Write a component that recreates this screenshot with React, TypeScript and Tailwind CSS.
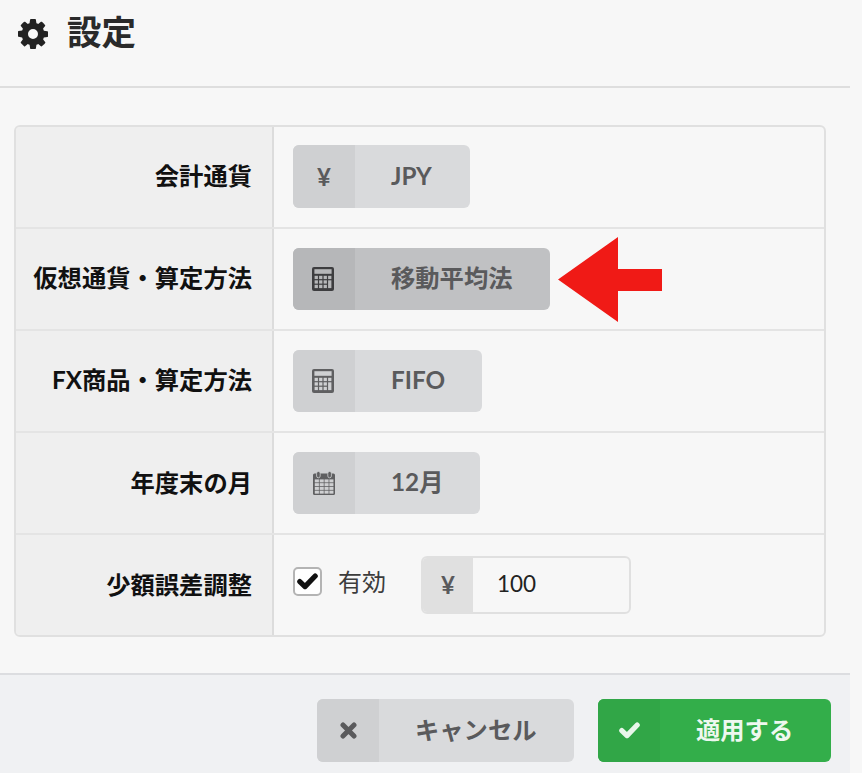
import React from "react";

const font = "[font-family:Lato,'Noto_Sans_CJK_JP',sans-serif]";

function Gear() {
  return (
    <svg width="30" height="30" viewBox="128 128 1536 1536" className="mt-[6px] shrink-0" fill="#222222">
      <path
        fillRule="evenodd"
        d="M1152 896q0-106-75-181t-181-75-181 75-75 181 75 181 181 75 181-75 75-181zm512-109v222q0 12-8 24t-20 13l-185 28q-19 54-39 91 35 50 107 138 10 12 10 25t-9 23q-27 37-99 108t-94 71q-12 0-26-9l-138-108q-44 23-91 38-16 136-29 186-7 28-36 28h-222q-14 0-24.500-8.500t-11.500-21.500l-28-184q-49-16-90-37l-141 107q-10 9-25 9-14 0-25-11-126-114-165-168-7-10-7-23 0-12 8-23 15-21 51-66.500t54-70.500q-27-50-41-99l-183-27q-13-2-21-12.500t-8-23.500v-222q0-12 8-23t19-13l186-28q14-46 39-92-40-57-107-138-10-12-10-24 0-10 9-23 26-36 98.500-107.500t94.500-71.500q13 0 26 10l138 107q44-23 91-38 16-136 29-186 7-28 36-28h222q14 0 24.500 8.500t11.500 21.500l28 184q49 16 90 37l142-107q9-9 24-9 13 0 25 10 129 119 165 170 7 8 7 22 0 12-8 23-15 21-51 66.500t-54 70.500q26 50 41 98l183 28q13 2 21 12.500t8 23.500z"
      />
    </svg>
  );
}

function Check({ color }: { color: string }) {
  return (
    <svg width="21" height="17" viewBox="0 0 21 17">
      <polyline points="2.8,8.6 8,13.6 18.2,3" fill="none" stroke={color} strokeWidth="5.2" strokeLinecap="round" strokeLinejoin="round" />
    </svg>
  );
}

function Cross() {
  return (
    <svg width="17" height="17" viewBox="0 0 17 17">
      <path d="M3 3 L14 14 M14 3 L3 14" fill="none" stroke="#5a5a5c" strokeWidth="5" strokeLinecap="round" />
    </svg>
  );
}

function Calculator({ color, hole }: { color: string; hole: string }) {
  const keys: React.ReactNode[] = [];
  for (let r = 0; r < 3; r++) {
    for (let c = 0; c < 4; c++) {
      if (c === 3 && r > 0) continue;
      keys.push(<rect key={`${r}-${c}`} x={2.6 + c * 4.5} y={8.8 + r * 4.5} width={3.3} height={3.3} fill={hole} />);
    }
  }
  return (
    <svg width="22" height="24" viewBox="0 0 22 24" className="mr-[2px]">
      <rect x="0" y="0" width="22" height="24" rx="2" fill={color} />
      <rect x="2.4" y="2.2" width="17.2" height="4.6" fill={hole} />
      {keys}
      <rect x="16.1" y="13.3" width="3.3" height="7.8" fill={hole} />
    </svg>
  );
}

function Calendar({ color, hole }: { color: string; hole: string }) {
  const cells: React.ReactNode[] = [];
  for (let r = 0; r < 4; r++) {
    for (let c = 0; c < 4; c++) {
      cells.push(<rect key={`${r}-${c}`} x={1.8 + c * 4.85} y={8.4 + r * 3.75} width={4.1} height={3} fill={hole} />);
    }
  }
  return (
    <svg width="22" height="24" viewBox="0 0 22 24">
      <rect x="0" y="2.6" width="22" height="21.4" rx="1.5" fill={color} />
      <rect x="3.6" y="0.4" width="3.6" height="6.4" rx="1.8" fill={color} stroke={hole} strokeWidth="0.8" />
      <rect x="14.8" y="0.4" width="3.6" height="6.4" rx="1.8" fill={color} stroke={hole} strokeWidth="0.8" />
      {cells}
    </svg>
  );
}

function Labeled({
  icon,
  text,
  width,
  active,
  up,
}: {
  icon: React.ReactNode;
  text: string;
  width: string;
  active?: boolean;
  up?: boolean;
}) {
  return (
    <div className={`flex h-[62.5px] overflow-hidden rounded-[6px] ${width} ${up ? "-mt-[1px]" : ""} ${active ? "bg-[#c0c1c3]" : "bg-[#d9dadc]"}`}>
      <div className={`flex h-full w-[62px] shrink-0 items-center justify-center ${active ? "bg-[#b6b7b9]" : "bg-[#cfd0d2]"}`}>
        {icon}
      </div>
      <div className="flex items-center pb-[1px] pl-[36px] text-[24.3px] font-bold text-[#5a5a5c]">{text}</div>
    </div>
  );
}

function Row({
  label,
  children,
  last,
  lowered,
}: {
  label: string;
  children: React.ReactNode;
  last?: boolean;
  lowered?: boolean;
}) {
  return (
    <div className={`flex ${last ? "h-[100px]" : "h-[102px] border-b-2 border-[#e4e4e4]"}`}>
      <div
        className={`flex w-[258px] shrink-0 items-center justify-end border-r-2 border-[#dcdcdc] bg-[#efefef] pr-[20px] text-[24.3px] font-bold text-[#111111] ${lowered ? "pt-0" : "pb-[2px]"}`}
      >
        {label}
      </div>
      <div className="flex flex-1 items-center pl-[19px]">{children}</div>
    </div>
  );
}

const Yen = () => <span className="text-[24px] font-bold text-[#5a5a5c]">¥</span>;

export default function App() {
  return (
    <div className={`h-[773px] w-[862px] overflow-hidden bg-[#f7f7f7] ${font}`}>
      <div className="flex h-[773px] w-[850px] flex-col">
        <div className="flex h-[88px] shrink-0 items-start border-b-2 border-[#dedede] pl-[18px] pt-[13px]">
          <Gear />
          <h1 className="-mt-[3px] ml-[19px] text-[34.5px] font-bold leading-[44px] text-[#2a2a2a]">設定</h1>
        </div>

        <div className="ml-[14px] mt-[37px] w-[812px] shrink-0 overflow-hidden rounded-[6px] border-2 border-[#e0e0e0]">
          <Row label="会計通貨">
            <Labeled width="w-[177px]" up icon={<Yen />} text="JPY" />
          </Row>
          <Row label="仮想通貨・算定方法">
            <Labeled width="w-[257px]" active icon={<Calculator color="#3d3d3f" hole="#b6b7b9" />} text="移動平均法" />
            <svg className="ml-[8px]" width="104" height="85" viewBox="0 0 104 85">
              <polygon points="0,42.500 60,0 60,32 104,32 104,54 60,54 60,85" fill="#f01a16" />
            </svg>
          </Row>
          <Row label="FX商品・算定方法">
            <Labeled width="w-[189px]" icon={<Calculator color="#5f5f61" hole="#cfd0d2" />} text="FIFO" />
          </Row>
          <Row label="年度末の月" lowered>
            <Labeled width="w-[187px]" icon={<Calendar color="#5f5f61" hole="#cfd0d2" />} text="12月" />
          </Row>
          <Row label="少額誤差調整" last lowered>
            <div className="flex items-center">
              <div className="-mt-[7px] flex h-[29px] w-[29px] items-center justify-center rounded-[5px] border-2 border-[#b4b4b4] bg-white">
                <Check color="#111111" />
              </div>
              <span className="-mt-[6px] ml-[16px] text-[24px] text-[#3c3c3c]">有効</span>
              <div className="ml-[35px] -mt-[1px] flex h-[58px] w-[210px] overflow-hidden rounded-[6px] border-2 border-[#e0e0e0]">
                <div className="flex w-[50px] items-center justify-center bg-[#e0e0e0]">
                  <Yen />
                </div>
                <div className="flex items-center pb-[1px] pl-[24px] text-[22.5px] text-[#222222]">100</div>
              </div>
            </div>
          </Row>
        </div>

        <div className="mt-[36px] flex flex-1 items-start justify-end gap-[24px] border-t-2 border-[#dcdde0] bg-[#f0f1f3] pr-[19px] pt-[24px]">
          <Labeled width="w-[257px]" icon={<Cross />} text="キャンセル" />
          <div className="flex h-[62.5px] w-[233px] overflow-hidden rounded-[6px] bg-[#33ae4a]">
            <div className="flex w-[62px] shrink-0 items-center justify-center bg-[#31a647]">
              <Check color="#e8f6ea" />
            </div>
            <div className="flex items-center pb-[1px] pl-[36px] text-[24.3px] font-bold text-[#eef8f0]">適用する</div>
          </div>
        </div>
      </div>
    </div>
  );
}
